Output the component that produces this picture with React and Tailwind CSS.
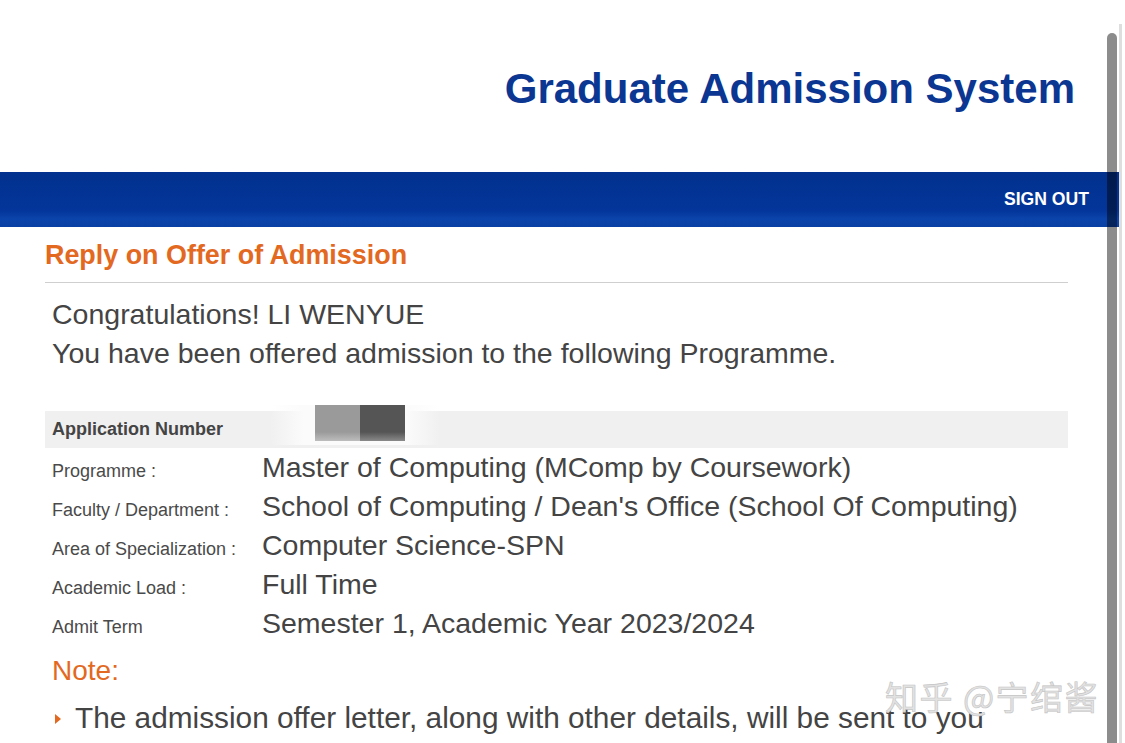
import React from 'react';

const DETAILS = [
  { label: 'Programme :', value: 'Master of Computing (MComp by Coursework)' },
  { label: 'Faculty / Department :', value: "School of Computing / Dean's Office (School Of Computing)" },
  { label: 'Area of Specialization :', value: 'Computer Science-SPN' },
  { label: 'Academic Load :', value: 'Full Time' },
  { label: 'Admit Term', value: 'Semester 1, Academic Year 2023/2024' },
];

export default function App() {
  return (
    <div className="relative h-[743px] w-[1125px] overflow-hidden bg-white font-['Liberation_Sans',Arial,sans-serif] text-[#444]">
      {/* header */}
      <div className="flex h-[172px] w-[1120px] justify-end pr-[45px] pt-[64px]">
        <h1 className="text-[42px] leading-[50px] font-bold text-[#0b3692]">Graduate Admission System</h1>
      </div>

      <div className="flex h-[55px] w-[1120px] items-center justify-end bg-[linear-gradient(to_bottom,#02318e_0%,#03359a_70%,#0b44ab_85%,#0a40a4_100%)] pr-[31px]">
        <span className="text-[17.6px] leading-none font-bold text-white">SIGN OUT</span>
      </div>

      {/* body */}
      <div className="w-[1068px] pl-[45px]">
        <div className="mt-[13px] border-b border-[#cfcfcf] pb-[12px]">
          <h2 className="text-[26.9px] leading-[30px] font-bold text-[#e2691f]">Reply on Offer of Admission</h2>
        </div>

        <div className="mt-[12px] pl-[7px] text-[28.5px] leading-[39px] text-[#444]">
          <p>Congratulations! LI WENYUE</p>
          <p>You have been offered admission to the following Programme.</p>
        </div>

        <div className="relative mt-[38px] flex h-[37px] items-center bg-[#f0f0f0] pl-[7px]">
          <span className="text-[18px] font-bold text-[#444]">Application Number</span>
          <div className="absolute top-[-6px] left-[225px] h-[40px] w-[170px] bg-[linear-gradient(to_right,#f0f0f000,#fbfbfb_20%,#fbfbfb_80%,#f0f0f000)]" />
          <div className="absolute top-[-6px] left-[270px] flex h-[36px] blur-[0.6px]">
            <div className="h-full w-[45px] bg-[linear-gradient(to_bottom,#9a9a9a_75%,#bdbdbd_100%)]" />
            <div className="h-full w-[45px] bg-[linear-gradient(to_bottom,#555_75%,#8a8a8a_100%)]" />
          </div>
        </div>

        <div className="pl-[7px]">
          {DETAILS.map((d) => (
            <div key={d.label} className="flex h-[39px] items-baseline">
              <span className="w-[210px] shrink-0 text-[18px] leading-[39px] text-[#4a4a4a]">{d.label}</span>
              <span className="text-[28.5px] leading-[39px] whitespace-nowrap text-[#444]">{d.value}</span>
            </div>
          ))}
        </div>

        <p className="mt-[8px] pl-[7px] text-[28px] leading-[39px] text-[#e2691f]">Note:</p>
        <div className="mt-[8px] flex items-center pl-[10px]">
          <svg width="6" height="10" viewBox="0 0 6 10" className="mt-[2px] mr-[14px] shrink-0">
            <path d="M0 0 L6 5 L0 10 Z" fill="#e2691f" />
          </svg>
          <span className="text-[29.8px] leading-[39px] whitespace-nowrap text-[#444]">
            The admission offer letter, along with other details, will be sent to you
          </span>
        </div>
      </div>

      {/* watermark */}
      <div className="absolute top-[676px] left-[885px] text-[33px] leading-[40px] tracking-[1.5px] whitespace-nowrap text-[#e2e2e2] [-webkit-text-stroke:0.6px_#c4c4c4] font-['Noto_Sans_CJK_SC',sans-serif]">
        知乎 @宁绾酱
      </div>

      {/* scrollbar */}
      <div className="absolute top-[24px] left-[1119px] h-[719px] w-[3px] bg-[#dedede]" />
      <div className="absolute top-[33px] left-[1107px] h-[710px] w-[10px] rounded-t-full bg-black/45" />
    </div>
  );
}
